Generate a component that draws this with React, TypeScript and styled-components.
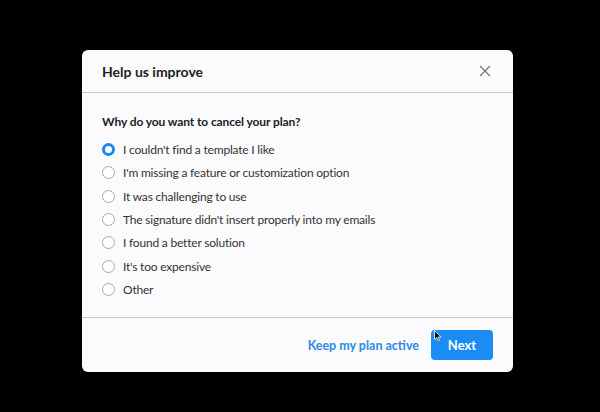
import styled, { createGlobalStyle } from 'styled-components';

const GlobalStyle = createGlobalStyle`
  html, body {
    margin: 0;
    padding: 0;
    background: #000;
  }
  body {
    font-family: Lato, "Noto Sans", sans-serif;
  }
`;

const Screen = styled.div`
  width: 600px;
  height: 412px;
  background: #000;
  padding: 50px 0 0 82px;
  box-sizing: border-box;
`;

const Modal = styled.div`
  position: relative;
  width: 431px;
  height: 322px;
  background: #fbfbfd;
  border-radius: 6px;
  display: flex;
  flex-direction: column;
  overflow: hidden;
`;

const Header = styled.div`
  height: 42px;
  display: flex;
  align-items: center;
  justify-content: space-between;
  padding: 0 20px;
  border-bottom: 1.5px solid #c9c9cc;
`;

const Title = styled.h2`
  margin: 0;
  font-size: 14px;
  font-weight: 700;
  color: #222;
`;

const CloseButton = styled.button`
  border: none;
  background: none;
  padding: 0;
  width: 14px;
  height: 14px;
  display: grid;
  place-items: center;
  margin-right: 1px;
  cursor: pointer;
`;

const Body = styled.div`
  flex: 1;
  padding: 19px 20px 0;
  border-bottom: 1.5px solid #c9c9cc;
`;

const Question = styled.p`
  margin: 0 0 6px;
  font-size: 12px;
  letter-spacing: -0.1px;
  line-height: 20px;
  font-weight: 700;
  color: #222;
`;

const Option = styled.label`
  display: flex;
  align-items: center;
  gap: 8px;
  height: 23.3px;
  font-size: 12px;
  letter-spacing: -0.2px;
  color: #333;
  cursor: pointer;
`;

const Radio = styled.span<{ $checked: boolean }>`
  width: 13px;
  height: 13px;
  border-radius: 50%;
  box-sizing: border-box;
  background: #fff;
  border: ${({ $checked }) => ($checked ? '3.5px solid #1a87f0' : '1px solid #a9a9ad')};
  flex-shrink: 0;
`;

const Footer = styled.div`
  height: 54px;
  display: flex;
  align-items: center;
  justify-content: flex-end;
  gap: 12px;
  padding: 0 20px;
`;

const LinkButton = styled.button`
  border: none;
  background: none;
  padding: 0;
  font-family: inherit;
  font-size: 12.5px;
  font-weight: 700;
  color: #2a8ae6;
  cursor: pointer;
`;

const PrimaryButton = styled.button`
  width: 62px;
  height: 30px;
  border: none;
  border-radius: 4px;
  background: #1c8cf5;
  color: #fff;
  font-family: inherit;
  font-size: 13px;
  font-weight: 700;
  cursor: pointer;
`;

const Cursor = styled.svg`
  position: absolute;
  left: 352px;
  top: 280px;
`;

const reasons = [
  "I couldn't find a template I like",
  "I'm missing a feature or customization option",
  'It was challenging to use',
  "The signature didn't insert properly into my emails",
  'I found a better solution',
  "It's too expensive",
  'Other',
];

export default function App() {
  return (
    <>
      <GlobalStyle />
      <Screen>
        <Modal>
          <Header>
            <Title>Help us improve</Title>
            <CloseButton aria-label="Close">
              <svg width="12" height="12" viewBox="0 0 12 12">
                <path d="M1 1L11 11M11 1L1 11" stroke="#777" strokeWidth="1.3" />
              </svg>
            </CloseButton>
          </Header>
          <Body>
            <Question>Why do you want to cancel your plan?</Question>
            {reasons.map((r, i) => (
              <Option key={r}>
                <Radio $checked={i === 0} />
                {r}
              </Option>
            ))}
          </Body>
          <Footer>
            <LinkButton>Keep my plan active</LinkButton>
            <PrimaryButton>Next</PrimaryButton>
          </Footer>
          <Cursor width="8" height="12" viewBox="0 0 8 12">
            <path d="M0.5 0.5L0.5 9.5L2.7 7.5L4.3 11L5.6 10.4L4.1 7H7.2Z" fill="#111" stroke="#fff" strokeWidth="0.8" />
          </Cursor>
        </Modal>
      </Screen>
    </>
  );
}
